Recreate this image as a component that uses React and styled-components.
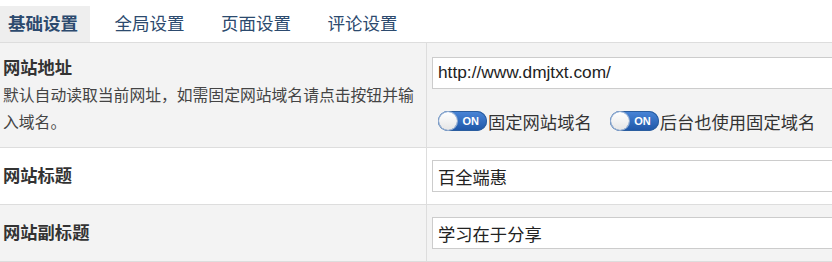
import styled, { createGlobalStyle } from "styled-components";

const Global = createGlobalStyle`
  html, body {
    margin: 0;
    padding: 0;
    background: #fff;
    overflow: hidden;
  }
  body {
    font-family: "Liberation Sans", "Noto Sans CJK SC", sans-serif;
    color: #333;
  }
`;

const Page = styled.div`
  width: 832px;
`;

const Tabs = styled.ul`
  display: flex;
  margin: 0;
  padding: 6px 0 0;
  list-style: none;
  border-bottom: 1px solid #ddd;
`;

const Tab = styled.li`
  height: 36px;
  line-height: 36px;
  padding: 0 12px 0 8px;
  margin-right: 16.5px;
  font-size: 17.5px;
  color: #2c4a6e;
  font-weight: ${(p) => (p.$active ? "bold" : "normal")};
  background: ${(p) => (p.$active ? "#eeeeee" : "transparent")};
`;

const Row = styled.div`
  display: grid;
  grid-template-columns: 427px 1fr;
  background: ${(p) => (p.$grey ? "#f3f3f3" : "#fff")};
  border-bottom: 1px solid #ddd;
  min-height: ${(p) => p.$h || 56}px;
`;

const Label = styled.div`
  display: flex;
  flex-direction: column;
  justify-content: center;
  padding: 11px 0 11px 3px;
  border-right: 1px solid #ddd;
`;

const Title = styled.div`
  font-size: 17.3px;
  font-weight: bold;
  line-height: 28px;
  color: #333;
`;

const Desc = styled.div`
  font-size: 15.8px;
  line-height: 27px;
  color: #444;
`;

const Field = styled.div`
  display: flex;
  flex-direction: column;
  justify-content: center;
  padding: 0 0 0 5px;
`;

const Input = styled.input`
  box-sizing: border-box;
  width: 440px;
  height: 32px;
  border: 1px solid #ccc;
  background: #fff;
  padding: 0 5px;
  font-family: "Liberation Sans", "Noto Sans CJK SC", sans-serif;
  font-size: 17.3px;
  color: #222;
  outline: none;
`;

const Switches = styled.div`
  display: flex;
  align-items: center;
  margin-top: 20px;
  padding-left: 6px;
  gap: 18px;
`;

const SwitchItem = styled.label`
  display: flex;
  align-items: center;
  gap: 1px;
  font-size: 17.3px;
  color: #333;
`;

const Toggle = styled.span`
  position: relative;
  display: inline-block;
  width: 49px;
  height: 20px;
  border-radius: 10px;
  background: linear-gradient(#4a86d8, #1d55a6);
  box-shadow: inset 0 0 0 1px #2a5d9f;
`;

const Knob = styled.span`
  position: absolute;
  left: 1px;
  top: 1px;
  width: 18px;
  height: 18px;
  border-radius: 50%;
  background: linear-gradient(#ffffff, #e6e6e6);
  box-shadow: 0 0 0 1px #9bb3d3;
`;

const OnText = styled.span`
  position: absolute;
  right: 8px;
  top: 0;
  line-height: 20px;
  font-size: 11px;
  font-weight: bold;
  color: #fff;
  font-family: "Liberation Sans", sans-serif;
`;

function Switch({ label }) {
  return (
    <SwitchItem>
      <Toggle>
        <Knob />
        <OnText>ON</OnText>
      </Toggle>
      {label}
    </SwitchItem>
  );
}

export default function App() {
  return (
    <Page>
      <Global />
      <Tabs>
        <Tab $active>基础设置</Tab>
        <Tab>全局设置</Tab>
        <Tab>页面设置</Tab>
        <Tab>评论设置</Tab>
      </Tabs>

      <Row $grey $h={104}>
        <Label>
          <Title>网站地址</Title>
          <Desc>默认自动读取当前网址，如需固定网站域名请点击按钮并输入域名。</Desc>
        </Label>
        <Field>
          <Input defaultValue="http://www.dmjtxt.com/" />
          <Switches>
            <Switch label="固定网站域名" />
            <Switch label="后台也使用固定域名" />
          </Switches>
        </Field>
      </Row>

      <Row>
        <Label>
          <Title>网站标题</Title>
        </Label>
        <Field>
          <Input defaultValue="百全端惠" />
        </Field>
      </Row>

      <Row $grey>
        <Label>
          <Title>网站副标题</Title>
        </Label>
        <Field>
          <Input defaultValue="学习在于分享" />
        </Field>
      </Row>
    </Page>
  );
}
